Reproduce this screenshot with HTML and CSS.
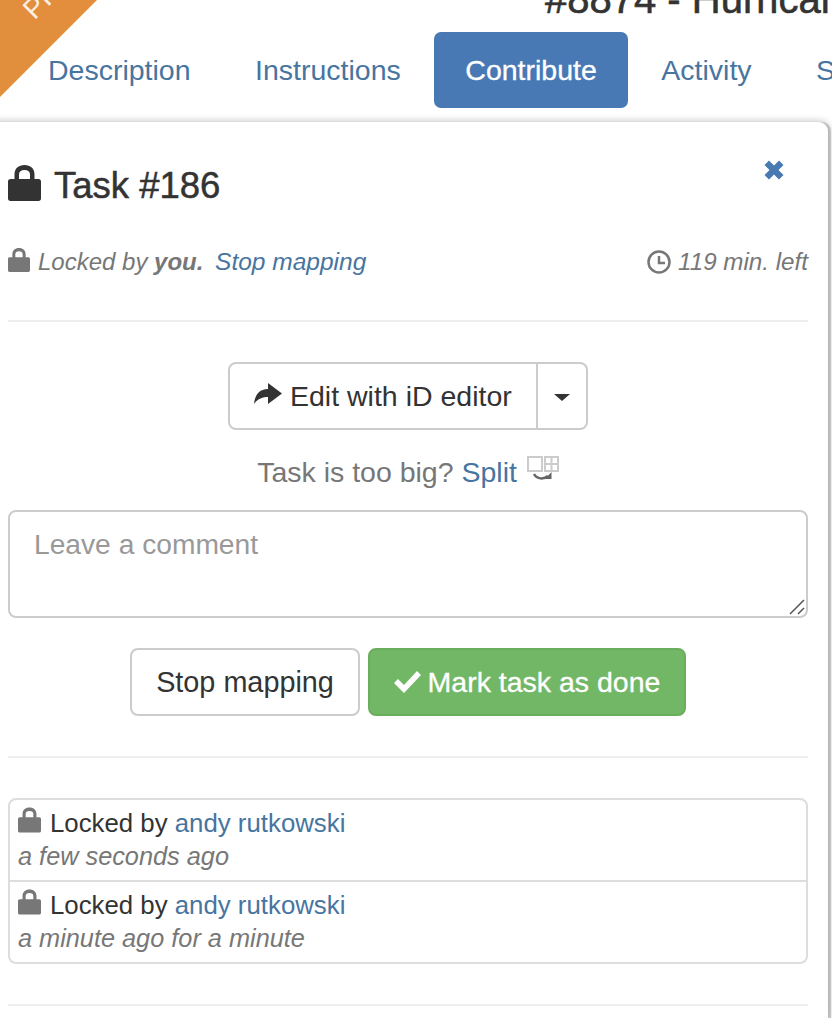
FILE: index.html
```html
<!DOCTYPE html>
<html lang="en">
<head>
  <meta charset="UTF-8">
  <title>Task #186</title>
  <link rel="stylesheet" href="styles.css">
</head>
<body>
  <svg class="sprite" width="0" height="0">
    <symbol id="lock" viewBox="0 0 33 36">
      <path d="M6.500 14V9.500C6.500 3.500 10.500 0 16.500 0S26.500 3.500 26.500 9.500V14h4C32 14 33 15 33 16.500V33.500c0 1.600-.9 2.500-2.500 2.500H2.500C.9 36 0 35.100 0 33.500V16.500C0 15 1 14 2.500 14H6.500zM11 14h11V9.500c0-2.800-2-4.500-5.500-4.500S11 6.700 11 9.500V14z"/>
    </symbol>
  </svg>

  <div class="ribbon"><span>PRIORITY</span></div>

  <div class="title-bar"><h1>#8874 - Hurricane</h1></div>

  <ul class="tabs">
    <li><a href="#">Description</a></li>
    <li><a href="#">Instructions</a></li>
    <li class="active"><a href="#">Contribute</a></li>
    <li><a href="#">Activity</a></li>
    <li><a href="#">Stats</a></li>
  </ul>

  <div class="card">
    <div class="task-head">
      <h2><svg class="icon lock-big"><use href="#lock"/></svg>Task #186</h2>
      <svg class="close" viewBox="0 0 20 20"><path d="M5 0.500L10 5.500 15 0.500 19.500 5 14.500 10 19.500 15 15 19.500 10 14.500 5 19.500 0.500 15 5.500 10 0.500 5z"/></svg>
    </div>

    <div class="meta">
      <div><svg class="icon lock-small"><use href="#lock"/></svg>Locked by <b>you.</b> <a href="#" class="stop-link">Stop mapping</a></div>
      <div class="time-left">
        <svg class="clock" viewBox="0 0 24 24"><circle cx="12" cy="12" r="10.500"/><path d="M12 6V13H18"/></svg>119 min. left
      </div>
    </div>

    <hr>

    <div class="edit-group">
      <button class="edit-main">
        <svg class="share" viewBox="0 0 28 21"><path d="M28 10.500L14 0V6C6 6 1 11 0 21 4 15.500 9 14 14 14V21z"/></svg>Edit with iD editor
      </button>
      <button class="edit-caret"><span></span></button>
    </div>

    <p class="too-big">Task is too big? <a href="#">Split</a>
      <svg class="split" viewBox="0 0 32 25">
        <path d="M1 1H15V15H1zM18 1H31V15H18zM24.500 1V15M18 8H31"/>
        <path class="split-arrow" d="M7 18C10 23.500 17 23.500 21 20"/>
        <path class="split-head" d="M24.500 16V23H18z"/>
      </svg>
    </p>

    <div class="comment-box">
      <textarea class="comment" placeholder="Leave a comment"></textarea>
      <svg class="grip" viewBox="0 0 16 16"><path d="M1 15L15 1M9 15L15 9"/></svg>
    </div>

    <div class="actions">
      <button class="btn">Stop mapping</button>
      <button class="btn btn-done">
        <svg class="check" viewBox="0 0 27 22"><path d="M0 12L4 8 10 14 23 0 27 4 10 22z"/></svg>Mark task as done
      </button>
    </div>

    <hr>

    <div class="history">
      <div class="history-row">
        <div><svg class="icon lock-list"><use href="#lock"/></svg>Locked by <a href="#">andy rutkowski</a></div>
        <div class="when">a few seconds ago</div>
      </div>
      <div class="history-row">
        <div><svg class="icon lock-list"><use href="#lock"/></svg>Locked by <a href="#">andy rutkowski</a></div>
        <div class="when">a minute ago for a minute</div>
      </div>
    </div>

    <hr>
  </div>
</body>
</html>
```

FILE: styles.css
```css
*{margin: 0; padding: 0; box-sizing: border-box;}
html, body{height: 1018px; overflow: hidden;}
body{position: relative; background: #fff; color: #333; font-family: "Liberation Sans", Arial, sans-serif; font-size: 28.500px;}
a{color: #47759f; text-decoration: none;}
button{font-family: inherit; font-size: 28.500px; color: #333; background: #fff; cursor: pointer;}
.sprite{position: absolute;}
.icon{fill: currentColor;}

.ribbon{position: absolute; top: 0; left: 0; width: 97px; height: 97px; background: #e28f3d; clip-path: polygon(0 0, 100% 0, 0 100%); overflow: hidden;}
.ribbon span{position: absolute; top: -4px; left: 38px; color: #fff; opacity: .85; font-size: 28px; line-height: 28px; transform: rotate(-45deg); transform-origin: 0 100%; white-space: nowrap;}

.title-bar{height: 32px; overflow: hidden; padding-left: 545px; display: flex; align-items: flex-end; white-space: nowrap;}
.title-bar h1{font-size: 40px; line-height: 46px; margin-bottom: 10px; font-weight: 400; -webkit-text-stroke: .6px #333; flex: none;}

.tabs{list-style: none; display: flex; gap: 2.500px; padding-left: 17px; white-space: nowrap;}
.tabs a{display: block; height: 76px; line-height: 76px; padding: 0 31px; border-radius: 7px;}
.tabs li{flex: none;}
.tabs .active a{background: #4879b4; color: #fff; -webkit-text-stroke: .3px #fff;}

.card{width: 838px; height: 896px; margin: 14px 0 0 -10px; padding: 38px 20px 0 18px; background: #fff; border-radius: 9px 9px 0 0; box-shadow: 0 0 6px 2px rgba(0,0,0,.18), 3px 0 1px rgba(0,0,0,.18);}
.card hr{border: 0; height: 2px; background: #eee; margin-top: 40px;}

.task-head{display: flex; justify-content: space-between; align-items: flex-start; padding-right: 24px;}
.task-head h2{display: flex; align-items: center; height: 52px; font-size: 36.500px; font-weight: 400; -webkit-text-stroke: .5px #333;}
.lock-big{width: 33px; height: 36px; margin-right: 13px; margin-top: -7px; stroke: none;}
.close{width: 20px; height: 20px; fill: #4879b0;}

.meta{display: flex; justify-content: space-between; height: 36px; line-height: 36px; margin-top: 32px; font-size: 24px; font-style: italic; color: #777;}
.meta a{margin-left: 5px; font-size: 24.500px;}
.lock-small{width: 22px; height: 24px; margin-right: 8px; vertical-align: -2px;}
.time-left{display: flex; align-items: center; font-size: 24.200px;}
.clock{width: 24px; height: 24px; margin-right: 7px; fill: none; stroke: #777; stroke-width: 2.500;}

.edit-group{display: flex; justify-content: center; margin-top: 40px;}
.edit-group button{height: 68px; border: 2px solid #ccc;}
.edit-main{display: flex; align-items: center; width: 310px; padding-left: 24px; border-radius: 8px 0 0 8px; white-space: nowrap;}
.share{width: 28px; height: 21px; margin-right: 8px; margin-top: -6px; fill: #333;}
.edit-group .edit-caret{width: 50px; border-left: 0; border-radius: 0 8px 8px 0;}
.edit-caret span{display: block; width: 0; margin: 2px auto 0; border-top: 7px solid #333; border-left: 8px solid transparent; border-right: 8px solid transparent;}

.too-big{height: 38px; line-height: 38px; margin-top: 23px; text-align: center; color: #777;}
.split{width: 32px; height: 25px; margin-left: 2px; vertical-align: 1px; fill: none; stroke: #ccc; stroke-width: 2;}
.split-arrow{stroke: #666; stroke-width: 2.500;}
.split-head{fill: #666; stroke: none;}

.comment-box{position: relative; margin-top: 19px;}
.comment{display: block; width: 100%; height: 108px; padding: 13px 24px; border: 2px solid #ccc; border-radius: 8px; font-family: inherit; font-size: 28.200px; line-height: 38px; color: #333; outline: none; resize: none;}
.comment::placeholder{color: #999; opacity: 1;}
.grip{position: absolute; right: 3px; bottom: 3px; width: 16px; height: 16px; fill: none; stroke: #555; stroke-width: 1.500;}

.actions{display: flex; justify-content: center; gap: 8px; margin-top: 30px;}
.btn{height: 68px; width: 230px; border: 2px solid #ccc; border-radius: 8px; font-size: 28.800px;}
.btn-done{display: flex; align-items: center; justify-content: center; width: 318px; border-color: #6aae5c; background: #72b766; color: #fff; font-size: 28.500px; -webkit-text-stroke: .3px #fff;}
.check{width: 27px; height: 22px; margin-right: 7px; fill: #fff;}

.history{margin-top: 40px; border: 2px solid #ddd; border-radius: 8px; font-size: 25.800px; line-height: 33px;}
.history-row{height: 80px; padding: 7px 8px;}
.history-row + .history-row{height: 82px; border-top: 2px solid #ddd;}
.lock-list{width: 23px; height: 26px; margin-right: 9px; color: #777; vertical-align: -1px;}
.when{font-style: italic; font-size: 25.300px; color: #777;}
```
